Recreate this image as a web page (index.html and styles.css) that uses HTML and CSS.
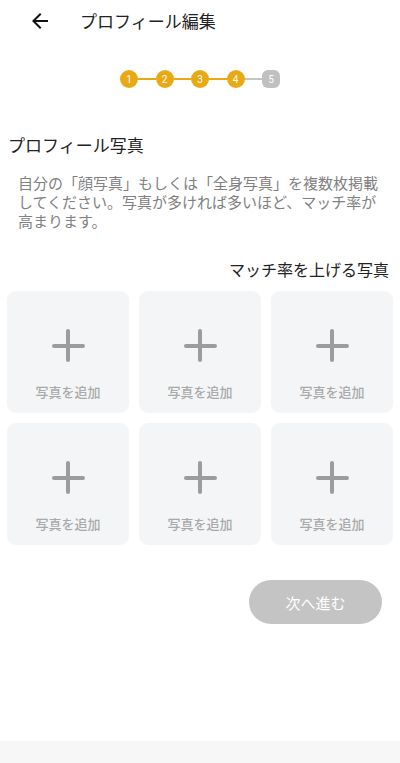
FILE: index.html
```html
<!DOCTYPE html>
<html lang="ja">

<head>
    <meta charset="UTF-8">
    <meta name="viewport" content="width=device-width, initial-scale=1.0">
    <title>プロフィール編集</title>
    <link rel="stylesheet" href="styles.css">
</head>

<body>
    <div class="page">
        <header class="header">
            <button class="back" aria-label="戻る">
                <svg width="24" height="24" viewBox="0 0 24 24">
                    <path d="M20 11H7.83l5.59-5.59L12 4l-8 8 8 8 1.41-1.41L7.83 13H20v-2z" fill="#111" />
                </svg>
            </button>
            <h1 class="title">プロフィール編集</h1>
        </header>

        <ol class="steps">
            <li class="step done">1</li>
            <li class="bar done"></li>
            <li class="step done">2</li>
            <li class="bar done"></li>
            <li class="step done">3</li>
            <li class="bar done"></li>
            <li class="step done">4</li>
            <li class="bar"></li>
            <li class="step todo">5</li>
        </ol>

        <h2 class="section-title">プロフィール写真</h2>
        <p class="note">自分の「顔写真」もしくは「全身写真」を複数枚掲載してください。写真が多ければ多いほど、マッチ率が高まります。</p>

        <div class="tip">マッチ率を上げる写真</div>

        <div class="photos">
            <button class="photo"><span class="plus"></span><span class="label">写真を追加</span></button>
            <button class="photo"><span class="plus"></span><span class="label">写真を追加</span></button>
            <button class="photo"><span class="plus"></span><span class="label">写真を追加</span></button>
            <button class="photo"><span class="plus"></span><span class="label">写真を追加</span></button>
            <button class="photo"><span class="plus"></span><span class="label">写真を追加</span></button>
            <button class="photo"><span class="plus"></span><span class="label">写真を追加</span></button>
        </div>

        <div class="actions">
            <button class="next" disabled>次へ進む</button>
        </div>

        <div class="bottom"></div>
    </div>
</body>

</html>
```

FILE: styles.css
```css
* {
    box-sizing: border-box;
}

body {
    margin: 0;
    background-color: #fff;
    font-family: "Noto Sans CJK JP", "Noto Sans", sans-serif;
    color: #222;
}

button {
    font-family: inherit;
    border: none;
    padding: 0;
    background: none;
}

.page {
    display: flex;
    flex-direction: column;
    min-height: 763px;
}

.header {
    display: flex;
    align-items: center;
    height: 42px;
}

.header .back {
    display: flex;
    width: 24px;
    height: 24px;
    margin-left: 28px;
}

.header .title {
    margin: 0 0 0 28px;
    font-size: 17px;
    font-weight: normal;
    line-height: 42px;
}

.steps {
    display: flex;
    align-items: center;
    justify-content: center;
    list-style: none;
    margin: 28px 0 0;
    padding: 0;
}

.steps .step {
    display: flex;
    align-items: center;
    justify-content: center;
    width: 18px;
    height: 18px;
    border-radius: 50%;
    font-family: Roboto, sans-serif;
    font-size: 10px;
    color: #fff;
    background-color: #e9a915;
}

.steps .step.todo {
    border-radius: 6px;
    background-color: #bfc0c0;
}

.steps .bar {
    width: 17.5px;
    height: 2px;
    background-color: #c4c4c4;
}

.steps .bar.done {
    background-color: #e9a915;
}

.section-title {
    margin: 45px 0 0 8px;
    font-size: 17px;
    font-weight: normal;
    line-height: 24px;
}

.note {
    margin: 16px 0 0 18px;
    width: 364px;
    font-size: 15px;
    line-height: 19px;
    color: #808080;
}

.tip {
    margin: 27px 11px 0 0;
    text-align: right;
    font-size: 16px;
    line-height: 24px;
}

.photos {
    display: grid;
    grid-template-columns: repeat(3, 122px);
    grid-auto-rows: 122px;
    gap: 10px;
    margin: 10px 7px 0;
}

.photo {
    display: flex;
    flex-direction: column;
    align-items: center;
    border-radius: 9px;
    background-color: #f4f5f6;
    cursor: pointer;
}

.photo .plus {
    position: relative;
    width: 33px;
    height: 33px;
    margin-top: 38px;
}

.photo .plus::before,
.photo .plus::after {
    content: '';
    position: absolute;
    border-radius: 2px;
    background-color: #9a9c9e;
}

.photo .plus::before {
    left: 0;
    top: 14.5px;
    width: 33px;
    height: 4px;
}

.photo .plus::after {
    top: 0;
    left: 14.5px;
    width: 4px;
    height: 33px;
}

.photo .label {
    margin-top: 21px;
    font-size: 13px;
    line-height: 18px;
    font-weight: 500;
    color: #a8a9aa;
}

.actions {
    display: flex;
    justify-content: flex-end;
    margin: 35px 18px 0 0;
}

.next {
    width: 133px;
    height: 44px;
    border-radius: 22px;
    background-color: #c4c4c4;
    color: #fff;
    font-size: 15px;
}

.bottom {
    margin-top: auto;
    height: 22px;
    background-color: #f7f7f7;
}
```
